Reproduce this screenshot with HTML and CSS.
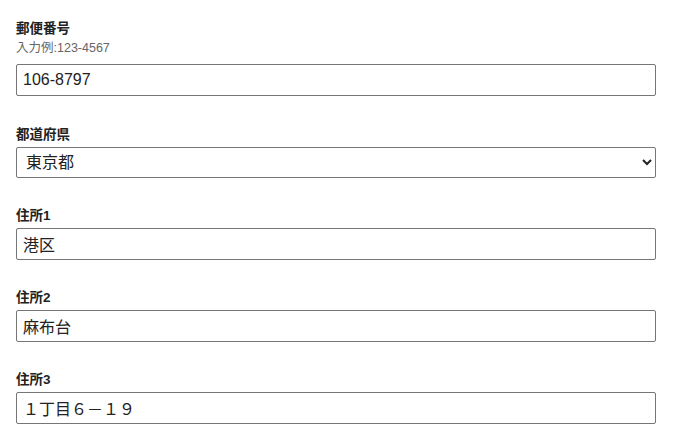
FILE: index.html
```html
<!DOCTYPE html>
<html lang="ja">
<head>
    <meta charset="UTF-8">
    <meta name="viewport" content="width=device-width, initial-scale=1.0">
    <title>住所入力</title>
    <link rel="stylesheet" href="styles.css">
</head>
<body>
    <form class="address-form">
        <div class="field field-zip">
            <label for="zip">郵便番号</label>
            <div class="hint">入力例:123-4567</div>
            <input type="text" id="zip" value="106-8797">
        </div>

        <div class="field">
            <label for="pref">都道府県</label>
            <select id="pref">
                <option>北海道</option>
                <option>神奈川県</option>
                <option selected>東京都</option>
                <option>大阪府</option>
            </select>
        </div>

        <div class="field">
            <label for="addr1">住所1</label>
            <input type="text" id="addr1" value="港区">
        </div>

        <div class="field">
            <label for="addr2">住所2</label>
            <input type="text" id="addr2" value="麻布台">
        </div>

        <div class="field">
            <label for="addr3">住所3</label>
            <input type="text" id="addr3" value="１丁目６－１９">
        </div>
    </form>
</body>
</html>
```

FILE: styles.css
```css
body {
    margin: 0;
    padding: 20px 16px 0;
    background: #fff;
    color: #222;
    font-family: "Liberation Sans", "Noto Sans CJK JP", sans-serif;
}

.address-form {
    width: 640px;
}

.field {
    margin-bottom: 29px;
}

.field-zip {
    margin-bottom: 30px;
}

.field label {
    display: block;
    font-size: 13.5px;
    font-weight: bold;
    line-height: 18px;
    margin-bottom: 3px;
}

.hint {
    font-size: 12.5px;
    line-height: 18px;
    color: #666;
    margin-top: -2px;
    margin-bottom: 7px;
}

.field input,
.field select {
    display: block;
    box-sizing: border-box;
    width: 100%;
    height: 32px;
    margin: 0;
    padding: 0 6px;
    border: 1px solid #767676;
    border-radius: 2px;
    background: #fff;
    color: #222;
    font-family: "Liberation Sans", "Noto Sans CJK JP", sans-serif;
    font-size: 16px;
}

.field select {
    height: 31px;
    padding-left: 5px;
}
```
